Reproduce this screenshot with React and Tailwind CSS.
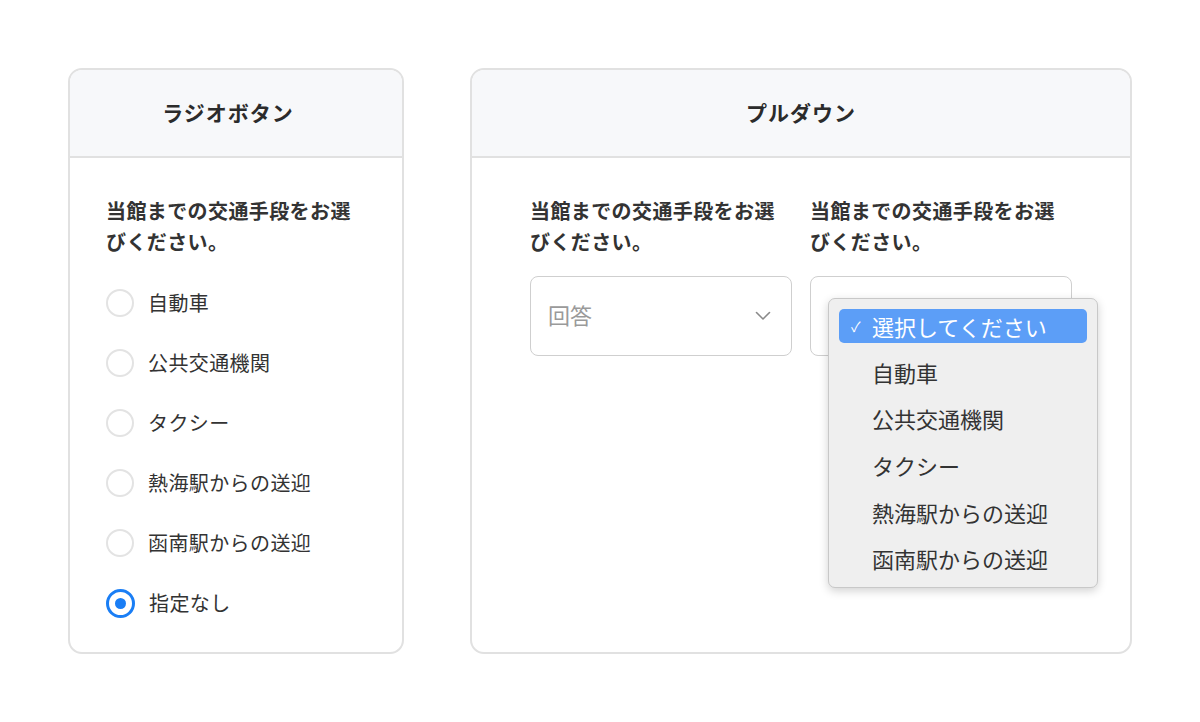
const options = ["自動車", "公共交通機関", "タクシー", "熱海駅からの送迎", "函南駅からの送迎", "指定なし"];
const menuItems = ["自動車", "公共交通機関", "タクシー", "熱海駅からの送迎", "函南駅からの送迎"];

const font = { fontFamily: '"Noto Sans CJK JP", "Noto Sans", sans-serif' };

const Card = ({ title, className, titleClass = "", children }) => (
  <section
    className={`flex flex-col overflow-visible rounded-[14px] border-2 border-[#e1e1e1] bg-white ${className}`}
  >
    <header className={`flex h-[88px] items-center justify-center rounded-t-[12px] border-b-2 border-[#e1e1e1] bg-[#f7f8fa] ${titleClass}`}>
      <h2 className="text-[21px] font-bold tracking-[1px] text-[#2b2b2b]">{title}</h2>
    </header>
    {children}
  </section>
);

const Question = () => (
  <p className="text-[20px] font-bold leading-[31px] tracking-[0.4px] text-[#333]">
    当館までの交通手段をお選びください。
  </p>
);

const Radio = ({ checked }) =>
  checked ? (
    <span className="flex h-[29px] w-[29px] shrink-0 items-center justify-center rounded-full border-[3px] border-[#1a7ef5] bg-white">
      <span className="h-[11px] w-[11px] rounded-full bg-[#1a7ef5]" />
    </span>
  ) : (
    <span className="h-[28px] w-[28px] shrink-0 rounded-full border-2 border-[#e3e3e3] bg-white" />
  );

const Chevron = () => (
  <svg width="16" height="10" viewBox="0 0 16 10" fill="none">
    <path d="M1.5 1.5 8 8l6.5-6.5" stroke="#8a8a8a" strokeWidth="1.6" strokeLinecap="round" strokeLinejoin="round" />
  </svg>
);

const Select = ({ children }) => (
  <div className="relative mt-[19px] flex h-[80px] w-[262px] items-center justify-between rounded-[8px] border border-[#cfcfcf] bg-white pl-[17px] pr-[20px]">
    {children}
  </div>
);

export default function App() {
  return (
    <div className="flex min-h-[722px] w-[1200px] gap-[66px] bg-white p-[68px]" style={font}>
      <Card title="ラジオボタン" titleClass="pr-[16px]" className="h-[586px] w-[336px]">
        <div className="px-[36px] pt-[37px]">
          <div className="w-[258px]">
            <Question />
          </div>
          <ul className="mt-[16px]">
            {options.map((o, i) => (
              <li key={o} className="flex h-[60px] items-center gap-[14px]">
                <Radio checked={i === options.length - 1} />
                <span className="text-[20px] tracking-[0.4px] text-[#333]">{o}</span>
              </li>
            ))}
          </ul>
        </div>
      </Card>

      <Card title="プルダウン" className="h-[586px] w-[662px]">
        <div className="grid grid-cols-[262px_262px] gap-[18px] px-[58px] pt-[37px]">
          <div>
            <Question />
            <Select>
              <span className="-translate-y-[2px] text-[22px] text-[#9a9a9a]">回答</span>
              <Chevron />
            </Select>
          </div>
          <div>
            <Question />
            <Select>
              <div className="absolute left-[17px] top-[21px] z-10 w-[270px] rounded-[7px] border border-[#c8c8c8] bg-[#efefef] px-[10px] pb-[5px] pt-[10px] shadow-[0_3px_10px_rgba(0,0,0,0.18)]">
                <div className="mb-[6px] flex h-[34px] items-center rounded-[5px] bg-[#5c9ef7] text-white">
                  <span className="w-[33px] pl-[12px] text-[14px] leading-none">✓</span>
                  <span className="text-[22px]">選択してください</span>
                </div>
                {menuItems.map((m) => (
                  <div key={m} className="flex h-[46.6px] items-center pl-[33px] text-[22px] text-[#333]">
                    {m}
                  </div>
                ))}
              </div>
            </Select>
          </div>
        </div>
      </Card>
    </div>
  );
}
